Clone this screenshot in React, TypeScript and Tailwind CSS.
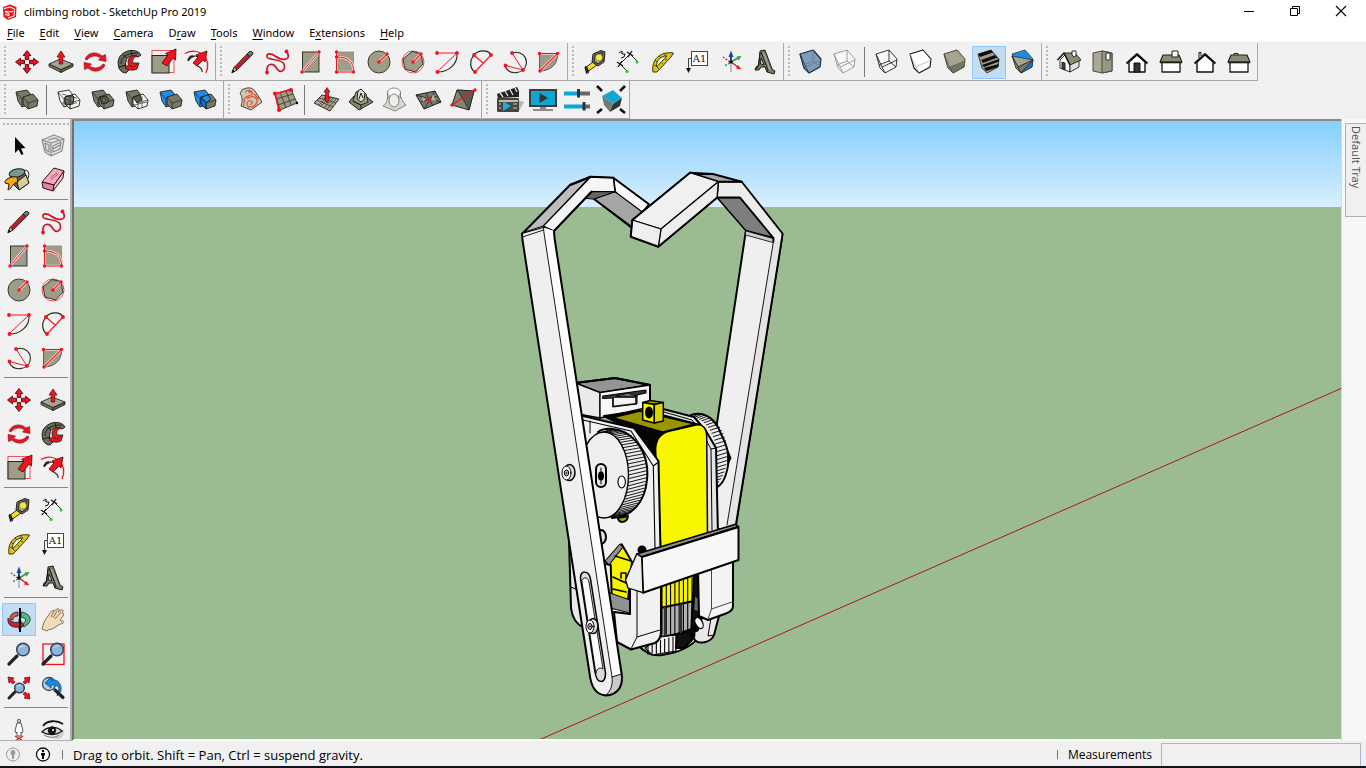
import type { ReactNode } from "react";

const RED = "#f01420";
const TAUPE = "#9e9c86";
const INK = "#25251f";

type IconName = keyof typeof icons;

const dot = (x: number, y: number, r = 1.9) => <circle cx={x} cy={y} r={r} fill={RED} stroke="none" />;

const redArrow = "M9 14 L15 6 L12.5 4.5 L23 0 L22.5 11 L20 9 L14 17 Z";

const overlapBack = "M1 4 L12 2 L17 8 L16 16 L7 19 L3 13 Z";

function Solid({ back, front, wireBack, wireFront }: { back: string; front: string; wireBack?: boolean; wireFront?: boolean }) {
  return (
    <g stroke={INK} strokeWidth="0.9" strokeLinejoin="round">
      <path d={overlapBack} fill={wireBack ? "#f6f6f6" : back} />
      <path d="M1 4 L7 11 L17 8 M7 11 L7 19" fill="none" strokeWidth="0.7" />
      <path d="M8 9 L18 6 L23 12 L22 18 L13 21 L8 16 Z" fill={wireFront ? "#f6f6f6" : front} />
      <path d="M8 9 L13 15 L23 12 M13 15 V21" fill="none" strokeWidth="0.7" />
    </g>
  );
}

const cubeOutline = "M1 4 L14 0 L22 9 L21 17 L10 23 L5 18 Z";

function Cube({ top, left, side, line = INK }: { top: string; left: string; side: string; line?: string }) {
  return (
    <g stroke={line} strokeWidth="1" strokeLinejoin="round">
      <path d={cubeOutline} fill={top} />
      <path d="M1 4 L7 18 L10 23 L5 18 Z" fill={left} strokeWidth="0.6" />
      <path d="M7 17 L22 11 L21 17 L10 23 Z" fill={side} strokeWidth="0.5" />
    </g>
  );
}

const wire = (color: string, width: number) => (
  <g fill="none" stroke={color} strokeWidth={width} strokeLinejoin="round">
    <path d={cubeOutline} fill="#f7f7f7" />
    <path d="M1 4 L7 17 L22 10 M7 17 L10 23 M14 0 L14 11 L21 17 M14 11 L4 15" />
  </g>
);

const lens = (x: number, y: number, r: number) => (
  <>
    <circle cx={x} cy={y} r={r} fill="#8fb4dc" stroke="#33424f" strokeWidth="1.5" />
    <path d={`M${x - r * 0.5} ${y - r * 0.2} A${r * 0.6} ${r * 0.6} 0 0 1 ${x + r * 0.3} ${y - r * 0.5}`} stroke="#c9e2f8" fill="none" />
  </>
);

const icons = {
  move: (
    <g fill={RED} stroke="#4a0508" strokeWidth="0.9">
      {[0, 90, 180, 270].map((a) => (
        <path key={a} d="M12 0.5 L15.8 5.5 H13.7 V9.5 H10.3 V5.5 H8.2 Z" transform={`rotate(${a} 12 12)`} />
      ))}
    </g>
  ),
  push: (
    <g stroke={INK} strokeWidth="0.9" strokeLinejoin="round">
      <path d="M0 14 L12 19.5 V22.5 L0 16.5 Z" fill="#77766a" />
      <path d="M24 14 L12 19.5 V22.5 L24 16.5 Z" fill="#5f5e52" />
      <path d="M0 14 L11 9 L24 14 L12 19.5 Z" fill="#a5a48f" />
      <path d="M12 1 L16 7 H13.7 V14 H10.3 V7 H8 Z" fill={RED} stroke="#6a0a10" strokeWidth="0.8" />
    </g>
  ),
  rotate: (
    <g fill={RED} stroke="#7a0810" strokeWidth="0.6" strokeLinejoin="round">
      <path d="M2 9 C5 2 14 1 19 6 L22.5 4.5 L23 11.5 L15.5 10 L17.5 8 C13 4.5 7 6 4 10 Z" />
      <path d="M2 9 C5 2 14 1 19 6 L22.5 4.5 L23 11.5 L15.5 10 L17.5 8 C13 4.5 7 6 4 10 Z" transform="rotate(180 12 12)" />
    </g>
  ),
  follow: (
    <g stroke="#1d1d18" strokeWidth="1" strokeLinejoin="round">
      <path d="M2 18 C-1 9 4 3 11 1 C16 -0.5 22 1 24 5 L21 7 C14 4 10 7 9 11 C8 15 9 18 12 20 L9 23 C6 23 3 21 2 18 Z" fill="#6c6c60" />
      <path d="M4 14 C4 7 9 3 21 3 M2 17 L9 15 M6 5 L10 8 M14 1 L15 5" fill="none" />
      <path d="M11 12 C11 7 15 5 20 6 C16 8 15 10 16 13 L22 13 L20 19 C16 21 12 20 9 19 L8 16 L11 16 C12 15 11 13 11 12 Z" fill={RED} strokeWidth="0.8" />
      <path d="M12 16 L17 17 L20 14" fill="none" stroke="#70070d" strokeWidth="0.8" />
    </g>
  ),
  scale: (
    <g>
      <rect x="1" y="0.5" width="22" height="22" fill="none" stroke="#f0525c" />
      <rect x="1" y="5.5" width="17" height="17.5" fill={TAUPE} stroke={INK} strokeWidth="1" />
      <path d={redArrow} transform="translate(2 -1)" fill={RED} stroke="#4a0508" strokeWidth="0.8" />
    </g>
  ),
  offset: (
    <g fill="none">
      <path d="M0 3.5 C14 -4 27 8 21 23" stroke={RED} strokeWidth="1.3" />
      <path d="M3 11 C7 5 12 5 14 8 M11 15 C15 17 18 19 17 22 M3 11 C3 8 6 5 8 6" stroke={INK} strokeWidth="1.2" />
      <path d="M8 13 L13 7 L11 5 L22 1 L20 12 L18 10 L12 16 Z" fill={RED} stroke="#4a0508" strokeWidth="0.8" />
    </g>
  ),
  pencil: (
    <g stroke="#161616" strokeWidth="0.8" strokeLinejoin="round">
      <path d="M1 22.5 L3 17.5 L18 2 C19 0.5 23 2.5 21.5 4.5 L6 20 Z" fill="#c81c24" />
      <path d="M1 22.5 L3 17.5 L6 20 Z" fill="#e7cf9e" />
      <path d="M16 4 L19.5 6.5 L21.5 4.5 C23 2.5 19 0.5 18 2 Z" fill="#77787c" />
      <path d="M1 22.5 L2 20 L3.5 21.5 Z" fill="#111" />
    </g>
  ),
  freehand: (
    <g fill="none">
      <path d="M22 2 C27 11 17 11 10 6 C6 3 1 3 2 7 C3 10 17 9 19 14 C21 20 16 24 12 19 C9 13 1 12 2 22" stroke="#c51525" strokeWidth="1.7" />
      {dot(21.5, 1.5)}
      {dot(2, 22.5)}
    </g>
  ),
  rect: (
    <g>
      <rect x="3.5" y="2" width="16.5" height="20" fill={TAUPE} stroke={INK} strokeWidth="0.9" />
      <path d="M3 22 L20 2" stroke="#f4dede" strokeWidth="2.6" />
      <path d="M3 22 L20 2" stroke={RED} strokeWidth="1" />
      {dot(3, 22, 1.7)}
      {dot(20, 2, 1.7)}
    </g>
  ),
  rotrect: (
    <g fill="none">
      <rect x="3.5" y="2" width="17" height="20" fill={TAUPE} stroke="#8a8978" strokeWidth="0.8" />
      <path d="M3.5 2 V22 H20.5 C21 12 15 7 3.5 7" stroke="#f4dede" strokeWidth="2.6" />
      <path d="M3.5 2 V22 H20.5 C21 12 15 7 3.5 7" stroke={RED} strokeWidth="1" />
      {dot(3.5, 2, 1.7)}
      {dot(3.5, 7, 1.7)}
      {dot(3.5, 22, 1.7)}
      {dot(20.5, 22, 1.7)}
    </g>
  ),
  circle: (
    <g>
      <circle cx="12" cy="12" r="11" fill={TAUPE} stroke="#3c3c34" />
      <path d="M12 12 L20 4" stroke="#f4dede" strokeWidth="2.8" />
      <path d="M12 12 L20 4" stroke={RED} strokeWidth="1.1" />
      {dot(12, 12, 1.7)}
      {dot(20, 4, 1.7)}
    </g>
  ),
  polygon: (
    <g>
      <circle cx="12" cy="12" r="11" fill="#f8e8e6" stroke="#f0525c" />
      <path d="M11 1.5 L20 3.5 L22 14 L14.5 22 L4 19 L2 9 Z" fill={TAUPE} stroke="#33332c" />
      <path d="M12 12 L20 4" stroke="#f4dede" strokeWidth="2.8" />
      <path d="M12 12 L20 4" stroke={RED} strokeWidth="1.1" />
      {dot(12, 12, 1.7)}
      {dot(20, 4, 1.7)}
    </g>
  ),
  arc: (
    <g fill="none">
      <path d="M22 3 C23 14 14 22 2 22" stroke={INK} strokeWidth="1.1" />
      <path d="M2 3 H22 L2 22" stroke={RED} />
      {dot(2, 3)}
      {dot(22, 3)}
      {dot(2.5, 22)}
    </g>
  ),
  arc2: (
    <g fill="none">
      <path d="M22 5 C19 -1 9 0 5 5 C0 11 1 19 6 22" stroke={INK} strokeWidth="1.2" />
      <path d="M5 5 L14 13 M22 5 L6 22" stroke={RED} strokeWidth="1.1" />
      {dot(5, 5)}
      {dot(22, 5)}
      {dot(6, 22)}
    </g>
  ),
  arc3: (
    <g fill="none">
      <path d="M9 3 C18 0 25 7 23 15 C21 24 6 26 2 16" stroke={INK} strokeWidth="1.1" />
      <path d="M9 3 L20 20 L2.5 15.5" stroke={RED} />
      {dot(9, 3)}
      {dot(2.5, 15.5)}
      {dot(20, 20)}
    </g>
  ),
  pie: (
    <g>
      <path d="M2.5 4 H20.5 C21 14 14 21 2.5 21 Z" fill={TAUPE} stroke="#55554a" strokeWidth="0.9" />
      <path d="M2.5 3.5 H20.5 L3 21" stroke="#f4dede" strokeWidth="2.6" fill="none" />
      <path d="M2.5 3.5 H20.5 L3 21" stroke={RED} strokeWidth="1.1" fill="none" />
      {dot(2.5, 3.5, 1.7)}
      {dot(20.5, 3.5, 1.7)}
      {dot(3, 21, 1.7)}
    </g>
  ),
  tape: (
    <g stroke="#22221c" strokeWidth="1" strokeLinejoin="round">
      <path d="M2 18 L10 12 L14 15 L4 22 Z" fill="#f4e21c" />
      <path d="M2 17 L3.5 16.5 L6 22 L3.5 23.5 Z" fill="#222" />
      <path d="M10 4 L18 0.5 L22 2 L21 12 L15 16 L9 12 Z" fill="#6b6b66" />
      <path d="M12.500 5 L19 2.5 L20 10 L15 14 L11 11 Z" fill="#a6a69b" />
      <circle cx="16" cy="7.5" r="3.5" fill="#f9ec23" stroke="#666" strokeWidth="0.6" />
    </g>
  ),
  dimension: (
    <g fill="none" stroke="#111">
      <path d="M3 14 L13 4 M3 14 L10 21 M13 4 L20 11" strokeWidth="0.9" />
      <path d="M0 12 L6 16 M5 11 L1 17 M10 2 L16 6 M15 1 L11 7" strokeWidth="1.3" />
      <path d="M2 3 L5 1 L5 4 L8 4 L7 7 L4 8" strokeWidth="1" />
      <circle cx="10" cy="21.5" r="1.5" fill="#35b83a" stroke="none" />
      <circle cx="20" cy="12" r="1.5" fill="#35b83a" stroke="none" />
    </g>
  ),
  protractor: (
    <g stroke="#3a3305" strokeWidth="1">
      <path d="M2 22 C0 10 9 1 22.5 3 L20 7 L6 22 Z M5.5 17 L16 6 C9 6 5 11 5.5 17 Z" fill="#d8c51c" fillRule="evenodd" />
      <path d="M3 15 L5 16 M4 10 L6 12 M8 6 L10 8 M14 3 L14 6 M8 19 L6 17 M12 14 L11 13 M16 10 L14 9" strokeWidth="0.8" />
    </g>
  ),
  text: (
    <g>
      <rect x="6.5" y="1.5" width="16" height="14" fill="#fff" stroke="#444" />
      <text x="14.5" y="12" fontSize="10" fontFamily="DejaVu Serif, serif" textAnchor="middle" fill="#111">
        A1
      </text>
      <path d="M6 8.5 H3.5 V19" fill="none" stroke="#444" />
      <path d="M1 18 H6 L3.5 23 Z" fill="#111" />
    </g>
  ),
  axes: (
    <g strokeWidth="1.5">
      <path d="M12 12 V3" stroke="#174a9c" strokeWidth="2" />
      <path d="M12 0.5 L14.5 7 H9.5 Z" fill="#174a9c" />
      <path d="M12 12 L19 8" stroke="#35983b" />
      <path d="M22.5 6 L19.5 10.5 L17.5 6.5 Z" fill="#35983b" />
      <path d="M12 12 L19 17" stroke="#dc1c24" />
      <path d="M22.5 19.5 L17 18.5 L19 15 Z" fill="#dc1c24" />
      <path d="M12 14 V22" stroke="#a9bfdf" strokeWidth="2" />
      <path d="M11 12 L4 7" stroke="#dc1c24" strokeDasharray="2 1.5" />
      <path d="M11 13 L5 16" stroke="#35983b" strokeDasharray="2 1.5" />
      <circle cx="12" cy="12" r="1.7" fill="#111" />
    </g>
  ),
  text3d: (
    <g stroke="#1d1d18" strokeWidth="1" strokeLinejoin="round">
      <path d="M7 1 L12 0 L19 19 L22 21 L21 24 L14 22 L12 17 L8 17 L6 20 L2 20 L3 17 L6 15 Z" fill="#77776a" />
      <path d="M8 8 L7.5 14 L11 14.5 Z" fill="#e9e9e2" />
      <path d="M8 2 L15 20 L14 22 M7 3 L5 17 L3 19" fill="none" />
      <path d="M10.5 3 L17 20" fill="none" stroke="#a7a795" strokeWidth="1.6" />
    </g>
  ),
  xray: (
    <g stroke="#1c2b38" strokeLinejoin="round">
      <path d={cubeOutline} fill="#7d9db9" strokeWidth="1.2" />
      <path d="M1 4 L7 17 L10 23 L5 18 Z" fill="#58768e" strokeWidth="0.6" />
      <path d="M7 17 L22 10 M14 0 L14 11 L21 17 M14 11 L4 15" fill="none" stroke="#587a99" strokeWidth="0.8" />
    </g>
  ),
  backedges: wire("#888", 0.8),
  wireframe: wire("#222", 0.9),
  hidden: (
    <g strokeLinejoin="round">
      <path d={cubeOutline} fill="#fff" stroke="#111" strokeWidth="1.1" />
      <path d="M1 4 L7 17 L22 10 M7 17 L10 23" fill="none" stroke="#aaa" strokeWidth="0.7" />
    </g>
  ),
  shaded: <Cube top="#a5a490" left="#8a8977" side="#777665" line="#44443a" />,
  textured: (
    <g strokeLinejoin="round">
      <path d={cubeOutline} fill={TAUPE} stroke="#22221c" strokeWidth="0.8" />
      <path d="M1 4 L14 0 L16 2.5 L3 7 Z M4 10 L18 5 L20.5 7.5 L6 13 Z M5 15 L22 9 V11.5 L7 17 Z M7 18 L22 14 L21 17 L9 21 Z" fill="#0c0c0a" />
    </g>
  ),
  mono: (
    <g stroke="#27271f" strokeWidth="0.7" strokeLinejoin="round">
      <path d={cubeOutline} fill="#1c8be8" />
      <path d="M1 6 L22 10 L7 17 Z" fill="#a5a490" />
      <path d="M1 6 L7 17 L10 23 L5 18 Z" fill="#8a8977" />
      <path d="M7 17 L22 10 L10 23 Z" fill="#77766a" />
      <path d="M22 10 L21 17 L10 23 Z" fill="#1377cf" />
    </g>
  ),
  iso: (
    <g stroke="#1c1c16" strokeWidth="0.9" strokeLinejoin="round">
      <path d="M3 10 L8 5 L13 15 V22 L3 18 Z" fill="#fdfdfd" />
      <path d="M13 14 L22 10 V17 L13 22 Z" fill="#e0e0dc" />
      <path d="M7 3 L18 3 L24 10 L13 15 Z" fill="#8c8b76" />
      <path d="M0.5 10 L7 3 L13 15" fill="none" strokeWidth="1.6" />
      <path d="M5 12 L8 13 V20 L5 18.5 Z" fill="#444" />
      <path d="M15 1 H19 V6 L17 7 L15 5 Z" fill="#fff" />
    </g>
  ),
  topview: (
    <g stroke="#4a4a3e" strokeWidth="1" strokeLinejoin="round">
      <path d="M2 3 L11 1 L21 3 V21 L11 23 L2 21 Z" fill="#aaa893" />
      <path d="M11 1 L21 3 V21 L11 23 Z" fill="#9a9883" />
      <rect x="15" y="3" width="4" height="7" rx="1" fill="#fff" stroke="#222" />
    </g>
  ),
  front: (
    <g stroke="#111" strokeLinejoin="round">
      <path d="M4 12 L12 5 L20 12 V22 H4 Z" fill="#fff" strokeWidth="1.4" />
      <path d="M1.5 13.5 L12 4 L22.5 13.5" fill="none" strokeWidth="2" />
      <rect x="9" y="13" width="6" height="9" fill="#333" />
    </g>
  ),
  right: (
    <g stroke="#1c1c16" strokeLinejoin="round">
      <rect x="3" y="12" width="18" height="10" fill="#fff" strokeWidth="1.3" />
      <path d="M4 5 H20 L23 12 H1 Z" fill="#8c8b76" strokeWidth="1.1" />
      <path d="M1 12.5 H23" strokeWidth="1.6" />
      <rect x="13" y="1" width="6" height="6" fill="#fff" />
    </g>
  ),
  back: (
    <g stroke="#111" strokeLinejoin="round">
      <path d="M6 8 V2.5 H8 V6" fill="#fff" />
      <path d="M4 12 L12 5 L20 12 V22 H4 Z" fill="#fff" strokeWidth="1.4" />
      <path d="M1.5 13.5 L12 4 L22.5 13.5" fill="none" strokeWidth="1.8" />
    </g>
  ),
  left: (
    <g stroke="#1c1c16" strokeLinejoin="round">
      <rect x="3" y="12" width="18" height="10" fill="#fff" strokeWidth="1.3" />
      <path d="M7 5 V3.5 H11 V5" fill="#fff" />
      <path d="M4 5 H20 L23 12 H1 Z" fill="#8c8b76" strokeWidth="1.1" />
      <path d="M1 12.5 H23" strokeWidth="1.6" />
    </g>
  ),
  outer: <Solid back="#77776a" front="#77776a" />,
  intersect: (
    <g>
      <Solid back="#fff" front="#fff" wireBack wireFront />
      <path d="M8 9 L15 7 L17 9 L16 16 L10 17 L8 15 Z" fill="#77776a" stroke="#111" strokeWidth="0.9" />
      <path d="M5 6 L20 10 M13 8 V21 M4 15 L20 15 M7 11 L17 14" stroke="#333" strokeWidth="0.7" />
    </g>
  ),
  union: (
    <g>
      <Solid back="#77776a" front="#77776a" />
      <path d="M9 9 L15 8 L18 12 L16 15 L11 16 Z" fill="#5c5c50" stroke="#111" strokeWidth="0.8" />
      <circle cx="13" cy="12" r="1.5" fill="#9e9c86" stroke="#111" strokeWidth="0.6" />
    </g>
  ),
  subtract: (
    <g>
      <Solid back="#77776a" front="#fff" wireFront />
      <path d="M8 9 L15 7 L17 12 L12 15 Z" fill="#55554a" stroke="#111" strokeWidth="0.8" />
      <path d="M17 8 V19 M9 17 L22 14" stroke="#444" strokeWidth="0.7" />
    </g>
  ),
  trim: <Solid back="#1f8eea" front="#77776a" />,
  split: (
    <g>
      <Solid back="#1f8eea" front="#77776a" />
      <path d="M8 9 L15 7 L18 11 L13 15 Z" fill="#1f8eea" stroke="#111" strokeWidth="0.8" />
      <path d="M8 9 L13 15 V21 L8 16 Z" fill="#1571cc" stroke="#111" strokeWidth="0.8" />
    </g>
  ),
  contours: (
    <g fill="none" strokeLinejoin="round">
      <path d="M3 2 C8 -1 13 -1 16 3 L23 14 L12 22 L2 18 C4 12 3 7 1 6 Z" fill="#c9c8bc" stroke="#44443a" />
      <path d="M6 4 C11 0 16 5 12 7 C7 9 5 9 5 13 M9 4 L13 4 M8 11 C13 6 19 10 18 14 C16 20 8 21 8 16 C8 14 10 12 12 13 C15 14 12 17 11 16 M4 18 C6 17 4 15 6 12 M20 11 L15 6" stroke="#e2552e" strokeWidth="1.3" />
    </g>
  ),
  scratch: (
    <g strokeLinejoin="round">
      <path d="M2 6 L18 1 L24 15 L7 22 Z" fill={TAUPE} stroke="#44443a" />
      <path d="M7 4 L13 20 M13 3 L18 17 M3 11 L20 6 M5 17 L22 11" stroke="#33332c" fill="none" strokeWidth="0.8" />
      <path d="M6 22 L2 6 L18 1.5" stroke={RED} strokeWidth="1.6" fill="none" />
      {dot(2, 5.5, 2.1)}
      {dot(18, 2, 2.1)}
      {dot(6, 22, 2.1)}
      <circle cx="24" cy="15" r="1.2" />
    </g>
  ),
  smoove: (
    <g strokeLinejoin="round">
      <path d="M-1 15 L7 7 L24 11 L15 23 Z" fill="#a5a490" stroke="#33332c" />
      <path d="M2 12 L18 19 M4 10 L21 15 M4 17 L13 8 M9 20 L18 10 M6 18 L15 9 M12 21 L21 11" stroke="#33332c" fill="none" strokeWidth="0.7" />
      <path d="M12 -0.5 L15 4 H13.5 V10 H15 L12 15 L9 10 H10.5 V4 H9 Z" fill={RED} stroke="#4a0508" strokeWidth="0.6" />
    </g>
  ),
  stamp: (
    <g stroke="#22221c" strokeLinejoin="round">
      <path d="M0 14 L5 8 L18 9 L24 14 L10 22 Z" fill="#85856f" />
      <path d="M4 13 L7 4 L12 2 L17 6 L19 14 L12 17 Z" fill="#a09f8c" />
      <path d="M8 11 L9 3 L12 1 L16 5 L15 12 L12 14 Z" fill="#dedecf" />
      <path d="M10 11 L12 5 L14 10 M4 13 L12 17 M12 17 V21" fill="none" />
    </g>
  ),
  drape: (
    <g stroke="#777" strokeWidth="0.9" fill="none">
      <path d="M0 18 C4 16 4 11 5 9 L18 9 C19 13 21 15 23 17 L12 23 Z" fill="#d5dacb" />
      <ellipse cx="11" cy="4.5" rx="6.5" ry="4.5" fill="#fff" fillOpacity="0.7" />
      <path d="M4.500 4 V10 M17.5 4 V10" />
      <ellipse cx="11" cy="12.5" rx="5" ry="6.5" fill="#eef0e8" />
    </g>
  ),
  detail: (
    <g stroke="#22221c" strokeLinejoin="round">
      <path d="M-1 7 L18 3 L24 14 L7 21 Z" fill="#77776a" />
      <path d="M-1 7 L24 14 M18 3 L7 21 M4 14 L21 8 M9 5 L16 18" strokeWidth="0.8" />
      <path d="M16 6 L19 13 L14 12 Z M5 9 L9 11 L6 14 Z" fill="#b5b4a2" stroke="none" />
      {dot(12, 11, 2)}
    </g>
  ),
  flip: (
    <g stroke="#22221c" strokeLinejoin="round">
      <path d="M6 2 L23 3 L18 22 L1 17 Z" fill="#85846f" />
      <path d="M6 2 L12 11 L18 22 L23 3 Z" fill="#5c5c50" strokeWidth="0.7" />
      <path d="M1 17 L23 2" stroke={RED} strokeWidth="1.2" />
      {dot(1, 17, 1.7)}
      {dot(24, 2, 1.7)}
    </g>
  ),
  clapper: (
    <g>
      <path d="M20 12 L27 14 L22 23 H18 Z" fill="#b6b6b6" />
      <rect x="0" y="10" width="22" height="14" rx="1" fill="#46463f" />
      <path d="M0 6 L20 -1 L22 3 L22 9 L1 10 Z" fill="#222" />
      <path d="M3 5 L6 9 M8 3 L11 8 M13 1.5 L16 7 M18 0 L20 4 M2 13 H21" stroke="#e6e6de" strokeWidth="1.3" />
      <path d="M6 13 L14 18 L6 23 Z" fill="#20a9d6" />
      <path d="M2 16 H4 M2 20 H4 M16 16 H20 M16 20 H20" stroke="#c8c8bc" />
    </g>
  ),
  monitor: (
    <g>
      <rect x="-2" y="1" width="28" height="18" fill="#3c3c3c" />
      <rect x="0" y="3" width="24" height="14" fill="#0ba6d5" />
      <path d="M8.5 5 L17 10 L8.5 15 Z" fill="#333" />
      <path d="M9 19 H15 V21 H22 V23 H2 V21 H9 Z" fill="#8a8a8a" />
    </g>
  ),
  sliders: (
    <g>
      <path d="M-1 5.5 H13" stroke="#0ba6d5" strokeWidth="4" />
      <path d="M13 5.5 H25" stroke="#666" strokeWidth="4" />
      <path d="M-1 18.5 H19" stroke="#0ba6d5" strokeWidth="4" />
      <path d="M19 18.5 H25" stroke="#666" strokeWidth="4" />
      <path d="M13.5 1 V9.5 M19 14 V22.5" stroke="#333" strokeWidth="3" />
    </g>
  ),
  fit: (
    <g>
      <path d="M3 8 L14 2 L23 10 L14 16 Z" fill="#12a7d3" />
      <path d="M3 8 L14 16 L11 24 L5 17 Z" fill="#777" />
      <path d="M14 16 L23 10 L21 18 L11 24 Z" fill="#333" />
      <path d="M-2 -2 L3 3 M26 -2 L21 3 M-2 25 L3 21 M26 25 L21 21" stroke="#111" strokeWidth="2.6" />
    </g>
  ),
  select: <path d="M8 3 V19 L11.5 15.5 L14.5 21 L16.5 20 L14 14.5 L18.5 14 Z" fill="#050505" />,
  component: (
    <g fill="none" stroke="#8c8c8c" strokeWidth="1.2" strokeLinejoin="round">
      <path d="M1 6 L13 1 L23 5 L21 17 L10 22 L4 18 Z" fill="#e0e0e0" />
      <path d="M1 6 L10 9 L23 5 M10 9 V22 M4 9 L8 11 V18 L5 16 Z M12 12 L20 8 L19 15 L12 18 Z M7 6 L14 4 L18 6 M12 15 L19 11" />
    </g>
  ),
  paint: (
    <g stroke="#1e1e18" strokeLinejoin="round">
      <path d="M16 3 C21 0 24 6 20 12" fill="none" />
      <path d="M3 6 L17 3 L22 15 L12 22 L5 15 Z" fill="#63645c" />
      <path d="M10 14 L19 7 L22 15 L12 22 Z" fill="#d4cda0" />
      <ellipse cx="10" cy="5" rx="8" ry="4" fill="#7b9494" transform="rotate(-12 10 5)" />
      <path d="M10 9 C5 8 -3 11 -2 15 L2 16 L1 22 C6 20 6 14 11 14 Z" fill="#f3a814" />
    </g>
  ),
  eraser: (
    <g stroke="#2b1319" strokeLinejoin="round">
      <path d="M1 14 L13 0 L23 3 L13 17 Z" fill="#f8aabd" />
      <path d="M1 14 L13 17 L12 23 L2 20 Z" fill="#ef7f9c" />
      <path d="M13 17 L23 3 L22 10 L12 23 Z" fill="#f9c1ce" />
      <path d="M9 10 L16 5 M10 12 L17 6" stroke="#b8576d" />
    </g>
  ),
  orbit: (
    <g stroke="#222" strokeWidth="0.8" strokeLinejoin="round">
      <path d="M3 12 C2 7 6 4 11 4 V8 C8 8 6 9 6 12 Z" fill="#d8574d" />
      <path d="M14 4 C22 5 26 11 21 16 L17 19 L15 16 C20 14 20 10 14 9 Z" fill="#54b978" />
      <path d="M1 10 C2 14 8 15 12 14 V11 L17 17 L12 22 V19 C6 20 0 18 1 10 Z" fill="#c8202b" />
      <path d="M13 0 V24" stroke="#080808" strokeWidth="2" />
    </g>
  ),
  pan: (
    <g stroke="#75664c" strokeWidth="0.9" strokeLinejoin="round">
      <path d="M3 14 L9 5 C10 3 12 2 13 3 L16 1 C18 0 19 2 17 4 L20 2 C22 1 23 3 21 5 L22 5 C24 6 21 10 19 12 L21 13 C24 13 23 16 19 16 L13 20 C10 22 7 21 6 23 L1 21 Z" fill="#f1dcb6" />
      <path d="M12 10 L16 3 M14 11 L20 4 M10 9 L13 3" fill="none" />
    </g>
  ),
  zoom: (
    <g>
      <path d="M2 22 L10 14" stroke="#202428" strokeWidth="3.2" strokeLinecap="round" />
      {lens(16, 7.5, 6.3)}
    </g>
  ),
  zoomwin: (
    <g>
      <rect x="2" y="2" width="21" height="20.5" fill="none" stroke={RED} strokeWidth="1.3" />
      <path d="M2 22 L10 14" stroke="#202428" strokeWidth="3.2" strokeLinecap="round" />
      {lens(16, 7.5, 6.3)}
    </g>
  ),
  extents: (
    <g>
      <path d="M2 22 L9 15" stroke="#202428" strokeWidth="3" strokeLinecap="round" />
      <g fill={RED} stroke="#5a060c" strokeWidth="0.7">
        <path d="M1 1 L7 2 L5.5 4 L8 6 L6 8 L3.5 6 L2 7 Z" />
        <path d="M23 1 L17 2 L18.5 4 L16 6 L18 8 L20.5 6 L22 7 Z" />
        <path d="M23 23 L17 22 L18.5 20 L16 18 L18 16 L20.5 18 L22 17 Z" />
      </g>
      {lens(12.5, 12, 4.8)}
    </g>
  ),
  previous: (
    <g>
      <circle cx="8" cy="8" r="6.5" fill="#b7d0ea" stroke="#3c4c5b" strokeWidth="1.3" />
      <path d="M4 7 L10 1 V4 C17 3 21 8 20 15 L16 20 L18 12 C16 9 13 9 10 9 V12 Z" fill="#1b87e0" stroke="#174a7c" strokeWidth="0.8" />
      <path d="M14 14 L22 21.5" stroke="#202428" strokeWidth="3.2" strokeLinecap="round" />
    </g>
  ),
  walkman: (
    <g stroke="#444" strokeWidth="0.9">
      <circle cx="12" cy="3" r="1.6" fill="#ddd" />
      <path d="M10 5 H14 L16 13 L15 15 L14 14 V18 H10 V14 L9 15 L8 13 Z" fill="#fff" />
      <path d="M8 18 L16 23 M16 18 L8 23" stroke={RED} strokeWidth="1.3" />
    </g>
  ),
  look: (
    <g fill="none" stroke="#111">
      <path d="M12 20 C18 23 24 19 23 11 L19 16 Z" fill="#ccc" stroke="none" />
      <path d="M2 8 C6 2 16 2 22 6" strokeWidth="1.8" />
      <path d="M1 14 C6 8 16 8 21 13 C15 18 6 17 1 14 Z" fill="#d8d8d8" strokeWidth="1.3" />
      <circle cx="11" cy="12.5" r="3.7" fill="#111" />
      <circle cx="12" cy="12" r="1" fill="#fff" stroke="none" />
      <path d="M3 17 C8 20 14 20 18 17" stroke="#777" />
    </g>
  ),
};

const labels: Partial<Record<IconName, string>> = { push: "Push/Pull", follow: "Follow Me", text3d: "3D Text", orbit: "Orbit" };

function Tool({ name, active }: { name: IconName; active?: boolean }) {
  return (
    <button
      type="button"
      aria-label={labels[name] ?? name}
      aria-pressed={active}
      className={
        active
          ? "flex h-[33px] w-[34px] shrink-0 items-center justify-center border border-[#90c8f6] bg-[#c2dcf3]"
          : "flex h-[33px] w-[34px] shrink-0 items-center justify-center border border-transparent hover:bg-[#ddebf8]"
      }
    >
      <svg viewBox="0 0 24 24" className="size-6 shrink-0 overflow-visible" aria-hidden="true">
        {icons[name]}
      </svg>
    </button>
  );
}

type Item = IconName | "|";

function ToolGroup({ label, items, active }: { label: string; items: Item[]; active?: IconName }) {
  return (
    <div role="toolbar" aria-label={label} className="flex h-[38px] items-center border-r border-b border-[#a8a8ac] bg-[#f1f1f1] pt-px pr-px">
      <span className="mr-1 ml-1 h-8 w-[2px] shrink-0 bg-[repeating-linear-gradient(#b9b9b9_0_2px,transparent_2px_4px)]" />
      {items.map((it, i) =>
        it === "|" ? (
          <span key={i} className="mr-[5px] ml-[2px] h-[30px] w-px shrink-0 bg-[#777]" />
        ) : (
          <Tool key={i} name={it} active={it === active} />
        ),
      )}
    </div>
  );
}

const rowOne: { label: string; items: Item[]; active?: IconName }[] = [
  { label: "Edit", items: ["move", "push", "rotate", "follow", "scale", "offset"] },
  { label: "Drawing", items: ["pencil", "freehand", "rect", "rotrect", "circle", "polygon", "arc", "arc2", "arc3", "pie"] },
  { label: "Construction", items: ["tape", "dimension", "protractor", "text", "axes", "text3d"] },
  { label: "Styles", items: ["xray", "backedges", "|", "wireframe", "hidden", "shaded", "textured", "mono"], active: "textured" },
  { label: "Views", items: ["iso", "topview", "front", "right", "back", "left"] },
];

const rowTwo: { label: string; items: Item[] }[] = [
  { label: "Solid Tools", items: ["outer", "|", "intersect", "union", "subtract", "trim", "split"] },
  { label: "Sandbox", items: ["contours", "scratch", "|", "smoove", "stamp", "drape", "detail", "flip"] },
  { label: "Animation", items: ["clapper", "monitor", "sliders", "fit"] },
];

const toolSet: IconName[][] = [
  ["select", "component", "paint", "eraser"],
  ["pencil", "freehand", "rect", "rotrect", "circle", "polygon", "arc", "arc2", "arc3", "pie"],
  ["move", "push", "rotate", "follow", "scale", "offset"],
  ["tape", "dimension", "protractor", "text", "axes", "text3d"],
  ["orbit", "pan", "zoom", "zoomwin", "extents", "previous"],
  ["walkman", "look"],
];

const menus: [string, string, string][] = [
  ["", "F", "ile"],
  ["", "E", "dit"],
  ["", "V", "iew"],
  ["", "C", "amera"],
  ["D", "r", "aw"],
  ["", "T", "ools"],
  ["", "W", "indow"],
  ["E", "x", "tensions"],
  ["", "H", "elp"],
];

function Bolt({ x, y, r }: { x: number; y: number; r: number }) {
  return (
    <g stroke="#000" strokeWidth="1.5">
      <ellipse cx={x + 1.5} cy={y} rx={r} ry={r + 2.5} fill="#dcdcdc" />
      <ellipse cx={x - 1.5} cy={y + 0.5} rx={r - 1} ry={r + 1.5} fill="#fff" strokeWidth="1" />
      <ellipse cx={x - 1.5} cy={y + 0.5} rx="2.2" ry="3" fill="#bbb" strokeWidth="1" />
      <circle cx={x - 1.5} cy={y + 0.5} r="0.8" fill="#000" stroke="none" />
    </g>
  );
}

const hatch = (n: number, f: (t: number) => [number, number, number, number]) =>
  Array.from({ length: n }, (_, i) => {
    const [x1, y1, x2, y2] = f(i / (n - 1));
    return <line key={i} x1={x1} y1={y1} x2={x2} y2={y2} />;
  });

function Robot(): ReactNode {
  const leftTread = hatch(38, (t) => {
    const a = (-100 + t * 185) * (Math.PI / 180);
    const b = (-95 + t * 170) * (Math.PI / 180);
    return [604 + 24.5 * Math.cos(a), 475 + 42.5 * Math.sin(a), 614 + 33 * Math.cos(b), 473 + 44 * Math.sin(b)];
  });
  const rightTread = hatch(24, (t) => {
    const a = (-88 + t * 132) * (Math.PI / 180);
    return [691 + 26 * Math.cos(a), 457 + 40 * Math.sin(a), 698 + 29 * Math.cos(a), 454 + 40 * Math.sin(a)];
  });
  return (
    <g stroke="#000" strokeWidth="2" strokeLinejoin="round" strokeLinecap="round">
      {/* right leg */}
      <path d="M745.7 232 L773.5 239 L782.5 234 L781.5 241 L735.5 528 L706 530 L716.7 425 Z" fill="#efefef" />
      <path d="M773.5 241 L781.5 238 L735.5 526 H727 Z" fill="#e4e4e4" stroke="none" />
      <path d="M773.5 241 L727 525" strokeWidth="0.9" />
      <path d="M717 197.5 L740 197.5 L773 237.5 L745.7 230.5 Z" fill="#7e7e7e" strokeWidth="1.5" />
      <path d="M746 231 L773 238.5 V242.5 L745.5 235 Z" fill="#cfcfcf" strokeWidth="0.8" />
      <path d="M718.3 181.7 L741.7 181.7 L782.7 233.5 L781.5 241 L773.5 241 L773 237 L740 197.5 H717 Z" fill="#ececec" stroke="none" />
      <path d="M773.5 241 V238 L740 197.5 H717 L718.3 181.7 L741.7 181.7 L782.5 233.5 L781.5 241 L735.5 527" fill="none" strokeWidth="1.8" />
      {/* left arm */}
      <path d="M613.3 177.7 L649 204.3 L638 218 L615 191.7 Z" fill="#fafafa" />
      <path d="M594 199 L615 191.7 L642 211.7 L634 230 Z" fill="#a6a6a6" strokeWidth="1.2" />
      <path d="M594 199 L633 228" />
      <path d="M586 198 L591.7 191 L615 191.7 L594 199 Z" fill="#666" strokeWidth="1" />
      <path d="M522 234 L570 185 L590.7 176.7 L543.3 228 Z" fill="#bcbcbc" />
      <path d="M543.3 226 L590.7 176.7 L613.3 177.7 L615 191.7 H591.7 L554 231 Z" fill="#f5f5f5" strokeWidth="1.3" />
      <path d="M570 185 L590.7 176.7 L613.3 177.7 M591.7 191.5 L554 231" fill="none" />
      {/* right arm end */}
      <path d="M690 172.7 L713 174 L741.7 181.7 H718.3 Z" fill="#a7a7a7" />
      <path d="M632.3 220 L690 172.7 L718.3 181.7 L661 229 Z" fill="#f0f0f0" strokeWidth="1.2" />
      <path d="M661 229 L718.3 181.7 L717 197.7 L658.3 246.7 Z" fill="#ededed" strokeWidth="1.2" />
      <path d="M632.3 220 L661 229 L658.3 246.7 L630.7 236.7 Z" fill="#eee" strokeWidth="1.2" />
      <path d="M717 197.7 L658.3 246.7 L630.7 236.7 L632.3 220 L690 172.7" fill="none" />
      {/* receiver box */}
      <path d="M575 383 L615 378 L650 385 L600 392.7 Z" fill="#949494" />
      <path d="M575 383 L600 392.7 V418 L578 414 Z" fill="#ebebeb" strokeWidth="1.3" />
      <path d="M600 392.7 L650 385 V407 L600 418 Z" fill="#f7f7f7" strokeWidth="1.3" />
      <path d="M603 396 L646 390 V393 L637 395 V404 L612.7 407 V398 L603 398.5 Z" fill="#333" strokeWidth="1" />
      <path d="M614 398 L635 398 V403 L614 405.5 Z" fill="#f3f3f3" stroke="none" />
      <path d="M616 396 L628 393.5 L637 396 Z" fill="#999" strokeWidth="0.8" />
      <path d="M575 383 L615 378 L650 385 V406" fill="none" />
      {/* right wheel */}
      <path d="M691 415 C705 410 716 420 721 434 C726 443 729 452 728.5 462 C727 474 724 483 717.5 487 L704 450 Z" fill="#ececec" />
      <path d="M728 451 L731 458 L728 464 Z" fill="#000" strokeWidth="1" />
      <g strokeWidth="0.9">{rightTread}</g>
      {/* right plate */}
      <path d="M663 409 L694 417 L706 431 L716 448 L718 535 H706 L700 425 L662 415 Z" fill="#e4e4e4" />
      <path d="M664 412 L692 420 L704 436 L711 449 L712 530 M711 449 L716 448" fill="none" strokeWidth="1" />
      {/* motor body */}
      <path d="M604 416 L640 411 L695 424 L665 434 L654 470 L632 430 Z" fill="#050505" />
      <path d="M613 417.5 L640 411 L695 424 L663 432 Z" fill="#989500" strokeWidth="1.3" />
      <path d="M655.7 452 C655 440 660 434 668 431.5 L696 425 C703 424 706.7 428 706.7 437 L707.5 535 L660.7 548 Z" fill="#f8f600" strokeWidth="1.5" />
      <path d="M642.7 402.5 L650 400.5 L663.3 402.5 L654.3 404.5 Z" fill="#a6a300" strokeWidth="1.5" />
      <path d="M642.7 402.5 L654.3 404.5 V423 L642.7 420 Z" fill="#f5f300" strokeWidth="1.5" />
      <path d="M654.3 404.5 L663.3 402.5 V421 L654.3 423 Z" fill="#d8d600" strokeWidth="1.5" />
      <ellipse cx="649" cy="412.5" rx="4" ry="6" fill="#000" stroke="none" />
      {/* left plate */}
      <path d="M570 417 L583 416 L634 428 L658.5 461 L660.5 550 L637 560 L631 640 C622 645 612 640 610 620 L576 600 Z" fill="#f1f1f1" />
      <path d="M583 420 L631 431 L653.3 466 L655 548 M653.3 466 L658.5 462" fill="none" strokeWidth="1.1" />
      <path d="M590 421 V433" strokeWidth="1" />
      {/* left wheel */}
      <path d="M598 432 C604 427 616 428 626 433 C642 443 649 460 647 480 C645 502 632 517 612 518 Z" fill="#ededed" />
      <g strokeWidth="0.9">{leftTread}</g>
      <ellipse cx="604" cy="475" rx="24.5" ry="43" fill="#efefef" strokeWidth="1.4" />
      <rect x="596" y="464" width="10" height="23" rx="5" fill="#e8e8e8" />
      <ellipse cx="601" cy="476" rx="3" ry="4.5" fill="#000" stroke="none" />
      <path d="M601 468 V484" strokeWidth="1" />
      <ellipse cx="621.7" cy="482" rx="3.7" ry="6" fill="#fafafa" strokeWidth="1.1" />
      <path d="M618 518 C618 523 627 524 628 516 Z" fill="#a8a500" />
      <ellipse cx="601" cy="537" rx="5" ry="7" fill="#e2e2e2" />
      {/* yellow gearbox behind the bumper */}
      <path d="M606 564 L621.7 544.3 L632 562 L628 600 L611.7 595 L610.7 565 Z" fill="#f4f200" />
      <path d="M605 561 L620 544 L623 547 L609 565 Z" fill="#929292" strokeWidth="1.1" />
      <path d="M615 556 L631 561 M613 577 L626 583 V573 H621 V578 M613 589 L626 592" fill="none" strokeWidth="1.5" />
      <path d="M610 593 L630 600 V613 L610 608 Z" fill="#919191" strokeWidth="1" />
      <circle cx="642" cy="550" r="4.5" fill="#000" stroke="none" />
      {/* lower motor */}
      <path d="M638 640 L660 575 L698 572 V638 C690 648 676 653 662 655 C653 656 644 652 638 645 Z" fill="#f3f3f3" />
      <path d="M660 575 L697 568 V602 L660.5 608 Z" fill="#f5f300" />
      <path d="M660.5 608 L694 601 V631 L660.5 637 Z" fill="#b2b2b2" />
      <path d="M660.5 637 L676 635 V651 L652 655 L645 648 Z" fill="#f2f2f2" strokeWidth="1.2" />
      <path d="M677 634 L692 629 V640 L684 648 H676 Z" fill="#111" />
      <path d="M694 575 L701 572 V634 L691 636 Z" fill="#111" />
      <path d="M695 596 L700 600 V612 L694 610 Z" fill="#5d6a74" strokeWidth="0.6" />
      <g strokeWidth="1.1">
        {hatch(8, (t) => [662 + t * 30, 578, 662 + t * 30, 634])}
        {hatch(7, (t) => [648 + t * 25, 644 - t * 7, 648 + t * 25, 654 - t * 2])}
      </g>
      <path d="M665 608 V635 M681 605 V632" stroke="#333" strokeWidth="2.4" />
      {/* right foot */}
      <path d="M695 627 L704 616 H719 L714 635 C711 643 698 645 694 639 Z" fill="#e9e9e9" />
      <path d="M711 618 L708 636 L714 635" fill="none" strokeWidth="1" />
      <ellipse cx="699" cy="623" rx="3.5" ry="6" fill="#fafafa" strokeWidth="1.3" transform="rotate(-28 699 623)" />
      <circle cx="696" cy="629" r="3" fill="#000" stroke="none" />
      <path d="M698 570 L733 560 V606 C733 610 730 612 726 613.5 L708 620 L699 616 Z" fill="#f3f3f3" />
      <path d="M711.5 569 V609 L708 619 M711.5 609 L732 602" fill="none" stroke="#444" strokeWidth="1" />
      {/* left lower block */}
      <path d="M630 587 L661 582 V631 C661 637 659 641 655 643 L631 649.5 L617 642 L614 612 L630 614 Z" fill="#f1f1f1" />
      <path d="M637 591 V637 L631 649 M637 637 L660 630 M630.5 588 V614" fill="none" strokeWidth="1" />
      {/* bumper */}
      <path d="M636.7 554 L735.7 524.3 L738.5 526.5 L641.7 557 Z" fill="#8d8d8d" strokeWidth="1.5" />
      <path d="M641.7 557 L738.5 527 V560 L643 592.7 Z" fill="#f8f8f8" />
      <path d="M636.7 554 L641.7 557 L643 592.7 L628 588 L625.5 580 Z" fill="#eee" strokeWidth="1.3" />
      {/* left leg */}
      <path d="M569 540 L571 608 C572 617 576 624 584 628 L580 560 Z" fill="#e9e9e9" />
      <path d="M571 587 L578 590" strokeWidth="1.2" />
      <path d="M522 234 L543.3 228 L554 231 V240 L602.3 550 L621.5 673 C624 688 616 695 606 695.5 C597 695 591 688 589.5 673 L570 548 L522.5 240 Z" fill="#efefef" stroke="none" />
      <path d="M543.5 228 L554 231 V236 L621 673 L612 677 Z" fill="#fdfdfd" stroke="none" />
      <path d="M612 677 L621.5 674 C623 686 617 694 606 695.5 C611 691 613 685 612 677 Z" fill="#c9c9c9" stroke="none" />
      <path d="M543.3 226 L544 233 L612 677 C613 684 611 691 606 695 M612 677 L621.5 674 M522.5 237 L543.5 230 M522 233 L543 226" fill="none" strokeWidth="0.9" />
      <path d="M554 231 L554.5 238 L621.5 673 C624 688 616 695 606 695.5 C597 695 591 688 589.5 673 L570 548 L522.5 240 L522 234" fill="none" />
      <path d="M580.5 578 C580 570 589 570 590.5 579 L605.5 673 C606 684 597 685 595 672 Z" fill="#d9d9d9" strokeWidth="1.5" />
      <path d="M582 580 C585 576 588 578 589 582 L603 669 C600 667 597 668 596 673 Z" fill="#fbfbfb" strokeWidth="0.9" />
      <Bolt x={568} y={472.5} r={5.5} />
      <Bolt x={591.5} y={626} r={5} />
    </g>
  );
}

export default function App() {
  return (
    <div className="flex h-screen flex-col overflow-hidden bg-[#f0f0f0] font-['Noto_Sans','Open_Sans',sans-serif] text-black">
      <header className="shrink-0 bg-white">
        <div className="flex h-6 items-center">
          <svg viewBox="0 0 16 16" className="ml-[2px] size-4" aria-hidden="true">
            <path d="M1 3 L8 0.5 L14.5 3 L14 13 L6 16 L1.5 13 Z" fill="#e21b23" />
            <path d="M2 4.5 L8 3 L12.5 5 L12 12 L6 14 M3 7 L6 8 L11 7.5 M3 10.5 L7 11.5 V9.5 L3.5 8.5" fill="none" stroke="#fff" strokeWidth="1" />
          </svg>
          <h1 className="ml-[6px] text-[11px] leading-4">climbing robot - SketchUp Pro 2019</h1>
          <div className="ml-auto mr-[2px] flex pb-[3px]">
            <button type="button" aria-label="Minimize" className="flex h-5 w-[46px] items-center justify-center">
              <svg viewBox="0 0 12 12" className="size-3"><path d="M1 6.500 H11" stroke="#000" /></svg>
            </button>
            <button type="button" aria-label="Restore" className="flex h-5 w-[46px] items-center justify-center">
              <svg viewBox="0 0 12 12" className="size-3" fill="none" stroke="#000"><path d="M1.5 3.5 H8.5 V10.5 H1.5 Z M3.5 3.5 V1.5 H10.5 V8.5 H8.5" /></svg>
            </button>
            <button type="button" aria-label="Close" className="flex h-5 w-[46px] items-center justify-center">
              <svg viewBox="0 0 12 12" className="size-3"><path d="M1 1 L11 11 M11 1 L1 11" stroke="#000" strokeWidth="1.1" /></svg>
            </button>
          </div>
        </div>
        <nav aria-label="Menu" className="flex h-[17px] gap-px">
          {menus.map(([a, u, b]) => (
            <button key={a + u + b} type="button" className="px-[7px] text-[11px] leading-4">
              {a}
              <span className="underline underline-offset-2">{u}</span>
              {b}
            </button>
          ))}
        </nav>
      </header>

      <div className="shrink-0 border-t border-[#f8f8f8] pt-px">
        <div className="flex">
          {rowOne.map((g) => (
            <ToolGroup key={g.label} {...g} />
          ))}
        </div>
        <div className="flex">
          {rowTwo.map((g) => (
            <ToolGroup key={g.label} {...g} />
          ))}
        </div>
      </div>

      <main className="flex min-h-0 flex-1">
        <aside aria-label="Large Tool Set" className="w-[72px] shrink-0 overflow-hidden border-r-2 border-b border-[#b0b0b0] bg-[#f1f1f1] pl-[2px]">
          <div className="mt-1 mb-1 ml-px h-[2px] w-[66px] bg-[repeating-linear-gradient(90deg,#b9b9b9_0_2px,transparent_2px_4px)]" />
          {toolSet.map((group, i) => (
            <div key={i}>
              {i > 0 && <div className="mt-[3px] mb-[5px] ml-[2px] h-px w-16 bg-[#888]" />}
              <div className="grid grid-cols-[34px_34px] gap-y-px">
                {group.map((name) => (
                  <Tool key={name} name={name} active={name === "orbit"} />
                ))}
              </div>
            </div>
          ))}
        </aside>
        <section aria-label="Model view" className="min-w-0 flex-1 border-t-2 border-b-2 border-l-2 border-t-[#888] border-b-white border-l-[#707070]">
          <svg viewBox="74 121 1267 618" preserveAspectRatio="xMidYMid slice" className="block h-full w-full" role="img" aria-label="Climbing robot model">
            <defs>
              <linearGradient id="sky" x1="0" y1="0" x2="0" y2="1">
                <stop offset="0" stopColor="#86cefd" />
                <stop offset="1" stopColor="#d9effe" />
              </linearGradient>
            </defs>
            <rect x="74" y="121" width="1267" height="86" fill="url(#sky)" />
            <rect x="74" y="207" width="1267" height="540" fill="#9bbb92" />
            <path d="M540 739.5 L1341 388.5" stroke="#a81a14" strokeWidth="1" />
            <Robot />
          </svg>
        </section>
        <aside aria-label="Trays" className="w-[25px] shrink-0 border-l border-[#d8d8d8] bg-[#f7f7f7] pt-1 pl-[3px]">
          <button type="button" className="flex h-[94px] w-full items-center border border-r-0 border-[#b0b0b0] bg-[#f0f0f0] pt-[2px] text-[11px] leading-4 text-[#555] [writing-mode:vertical-rl]">
            Default Tray
          </button>
        </aside>
      </main>

      <footer className="flex h-[25px] shrink-0 items-center bg-[#f0f0f0] pt-[2px] font-['Open_Sans','Noto_Sans',sans-serif] text-[13px] leading-5">
        <svg viewBox="0 0 16 16" className="ml-[5px] size-4" aria-hidden="true">
          <circle cx="8" cy="7.5" r="6.5" fill="#eee" stroke="#999" />
          <path d="M8 3 C5 3 5 6.5 7 8.5 V12 H9 V8.5 C11 6.5 11 3 8 3 Z" fill="#999" />
        </svg>
        <svg viewBox="0 0 16 16" className="ml-[14px] size-4" aria-hidden="true">
          <circle cx="8" cy="7.5" r="6.5" fill="#fff" stroke="#111" strokeWidth="1.3" />
          <circle cx="8" cy="4" r="1.3" />
          <path d="M6 6 H10 V8.5 H9 V12 H7 V8.5 H6 Z" />
        </svg>
        <span className="ml-[11px] h-[9px] w-px bg-[#777]" />
        <p className="ml-[10px]">Drag to orbit. Shift = Pan, Ctrl = suspend gravity.</p>
        <span className="ml-auto h-[9px] w-px bg-[#777]" />
        <label htmlFor="measure" className="ml-[10px] text-[12px]">Measurements</label>
        <input id="measure" type="text" className="mr-[5px] ml-[9px] h-[23px] w-[200px] border border-b-0 border-[#abb9cf] bg-[#f0f0f0] px-1 outline-none" />
      </footer>
      <div className="h-[2px] shrink-0 bg-[#12131a]" />
    </div>
  );
}
